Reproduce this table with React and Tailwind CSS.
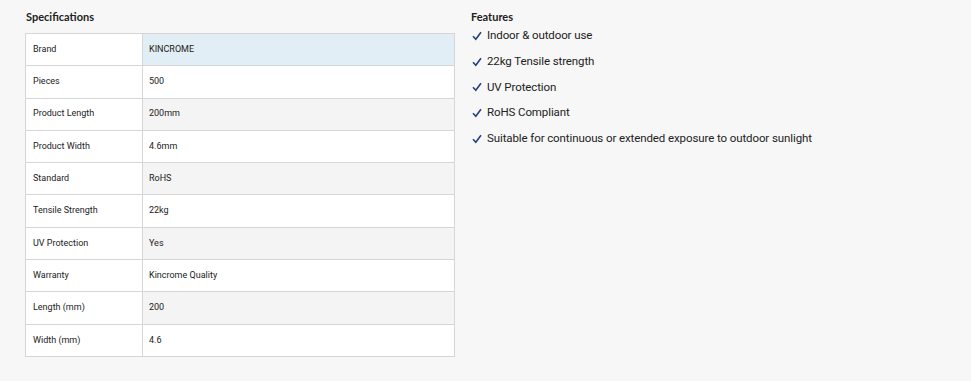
const specs = [
  ["Brand", "KINCROME"],
  ["Pieces", "500"],
  ["Product Length", "200mm"],
  ["Product Width", "4.6mm"],
  ["Standard", "RoHS"],
  ["Tensile Strength", "22kg"],
  ["UV Protection", "Yes"],
  ["Warranty", "Kincrome Quality"],
  ["Length (mm)", "200"],
  ["Width (mm)", "4.6"],
];

const features = [
  "Indoor & outdoor use",
  "22kg Tensile strength",
  "UV Protection",
  "RoHS Compliant",
  "Suitable for continuous or extended exposure to outdoor sunlight",
];

function valueBg(i) {
  if (i === 0) return "bg-[#e2eef5]";
  return i % 2 === 0 ? "bg-[#f4f4f4]" : "bg-white";
}

function Check() {
  return (
    <svg width="10" height="10" viewBox="0 0 10 10" className="mr-[5px] shrink-0">
      <path d="M1 5.2 L3.8 8.2 L9 1.2" fill="none" stroke="#25407e" strokeWidth="1.6" />
    </svg>
  );
}

function App() {
  return (
    <div className="w-[971px] h-[381px] bg-[#f7f7f7] text-[#222] font-['Roboto',sans-serif] flex">
      <div className="w-[430px] ml-[25px] pt-[9px]">
        <h2 className="text-[11px] font-bold font-['Lato',sans-serif] h-[24px] leading-[16px] pl-[1px]">
          Specifications
        </h2>
        <table className="w-[430px] border-collapse text-[9px]">
          <tbody>
            {specs.map(([label, value], i) => (
              <tr key={label} className="h-[32.3px]">
                <td className="w-[117px] border border-[#d6d6d6] bg-white px-[7px]">{label}</td>
                <td className={`border border-[#d6d6d6] px-[6px] ${valueBg(i)}`}>{value}</td>
              </tr>
            ))}
          </tbody>
        </table>
      </div>

      <div className="ml-[16px] pt-[9px]">
        <h2 className="text-[11px] font-bold font-['Lato',sans-serif] leading-[16px]">Features</h2>
        <ul className="-mt-[2px]">
          {features.map((f) => (
            <li key={f} className="flex items-center h-[25.7px] text-[11.5px] tracking-[-0.1px] pl-[1px]">
              <Check />
              <span>{f}</span>
            </li>
          ))}
        </ul>
      </div>
    </div>
  );
}

export default App;
